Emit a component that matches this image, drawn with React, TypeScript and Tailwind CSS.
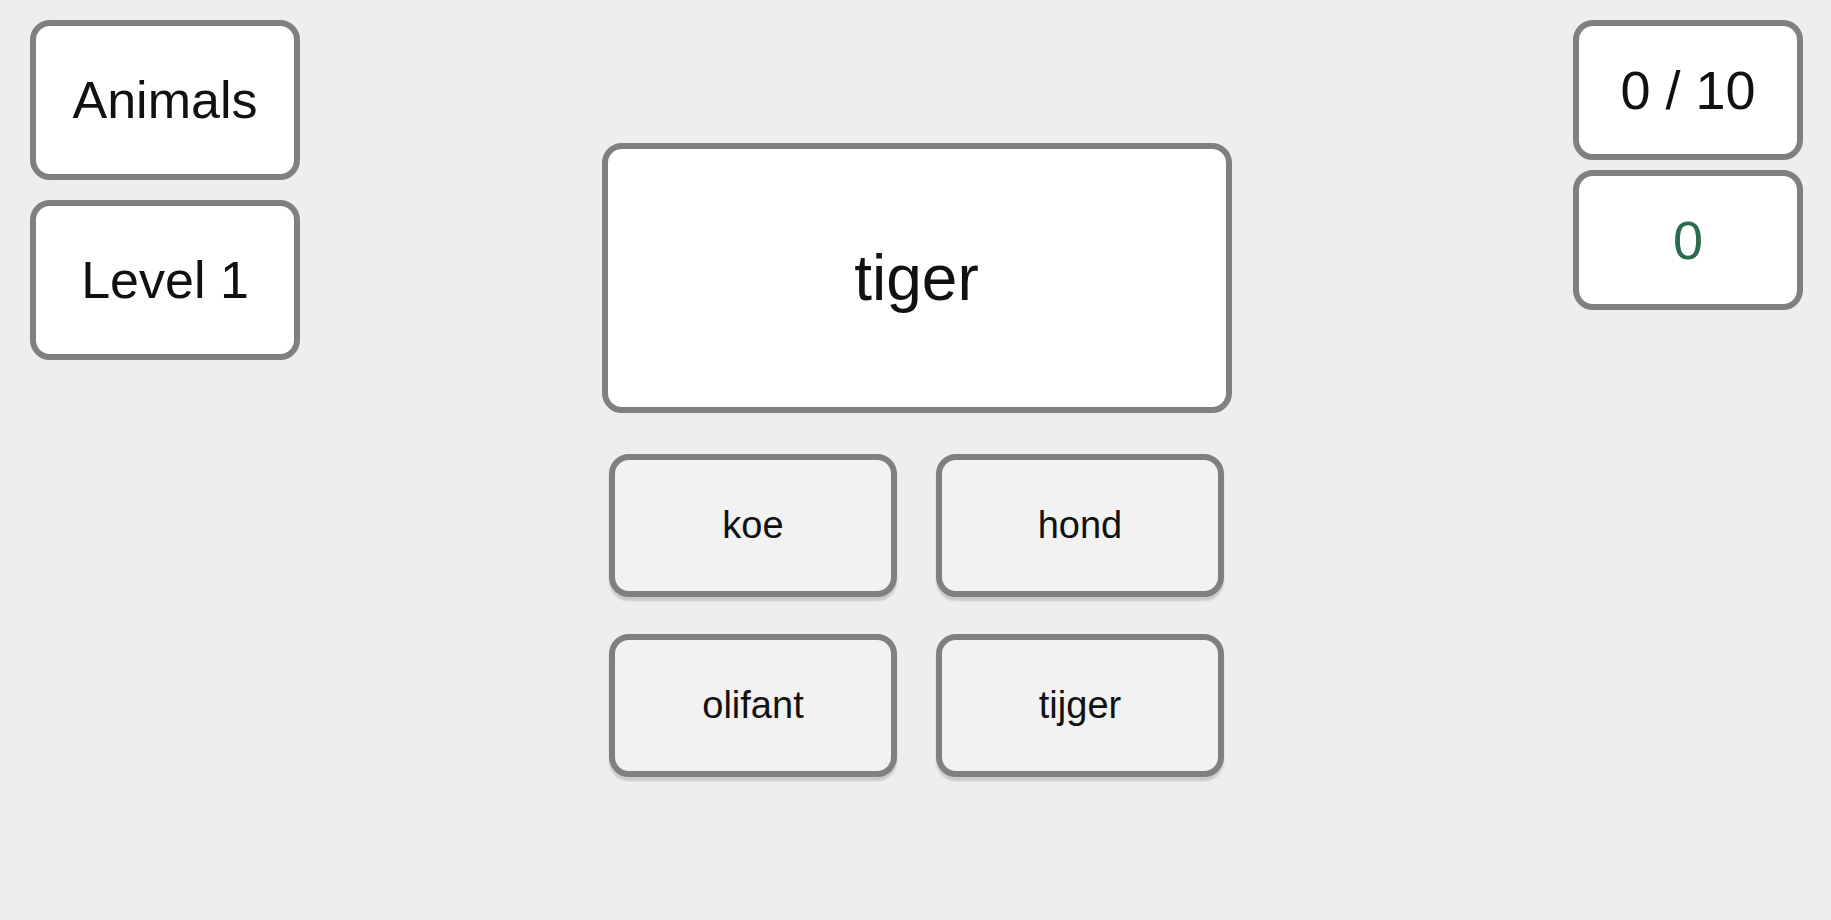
const options = ['koe', 'hond', 'olifant', 'tijger'];

function InfoBox({ children, className = '' }: { children: React.ReactNode; className?: string }) {
  return (
    <div
      className={`flex items-center justify-center rounded-[20px] border-[6px] border-[#808080] bg-white ${className}`}
    >
      {children}
    </div>
  );
}

export default function App() {
  return (
    <div
      className="min-h-[920px] w-full bg-[#eeeeee] text-[#111111]"
      style={{ fontFamily: '"Liberation Sans", Arial, sans-serif' }}
    >
      <div className="grid grid-cols-[1fr_auto_1fr] pl-[30px] pr-[28px] pt-[20px]">
        {/* left: category + level */}
        <div className="flex flex-col gap-[20px] justify-self-start">
          <InfoBox className="h-[160px] w-[270px] text-[52px]">Animals</InfoBox>
          <InfoBox className="h-[160px] w-[270px] text-[52px]">Level 1</InfoBox>
        </div>

        {/* center: word + answers */}
        <div className="flex flex-col items-center pt-[123px]">
          <InfoBox className="h-[270px] w-[630px] text-[64px]">tiger</InfoBox>
          <div className="mt-[41px] grid grid-cols-[288px_288px] gap-x-[39px] gap-y-[37px]">
            {options.map((word) => (
              <button
                key={word}
                className="flex h-[143px] items-center justify-center rounded-[20px] border-[6px] border-[#808080] bg-[#f2f2f2] text-[38px] text-[#111111] shadow-[0_4px_2px_rgba(0,0,0,0.15)]"
              >
                {word}
              </button>
            ))}
          </div>
        </div>

        {/* right: progress + score */}
        <div className="flex flex-col gap-[10px] justify-self-end">
          <InfoBox className="h-[140px] w-[230px] text-[54px]">0 / 10</InfoBox>
          <InfoBox className="h-[140px] w-[230px] text-[54px] text-[#2b6b4e]">0</InfoBox>
        </div>
      </div>
    </div>
  );
}
